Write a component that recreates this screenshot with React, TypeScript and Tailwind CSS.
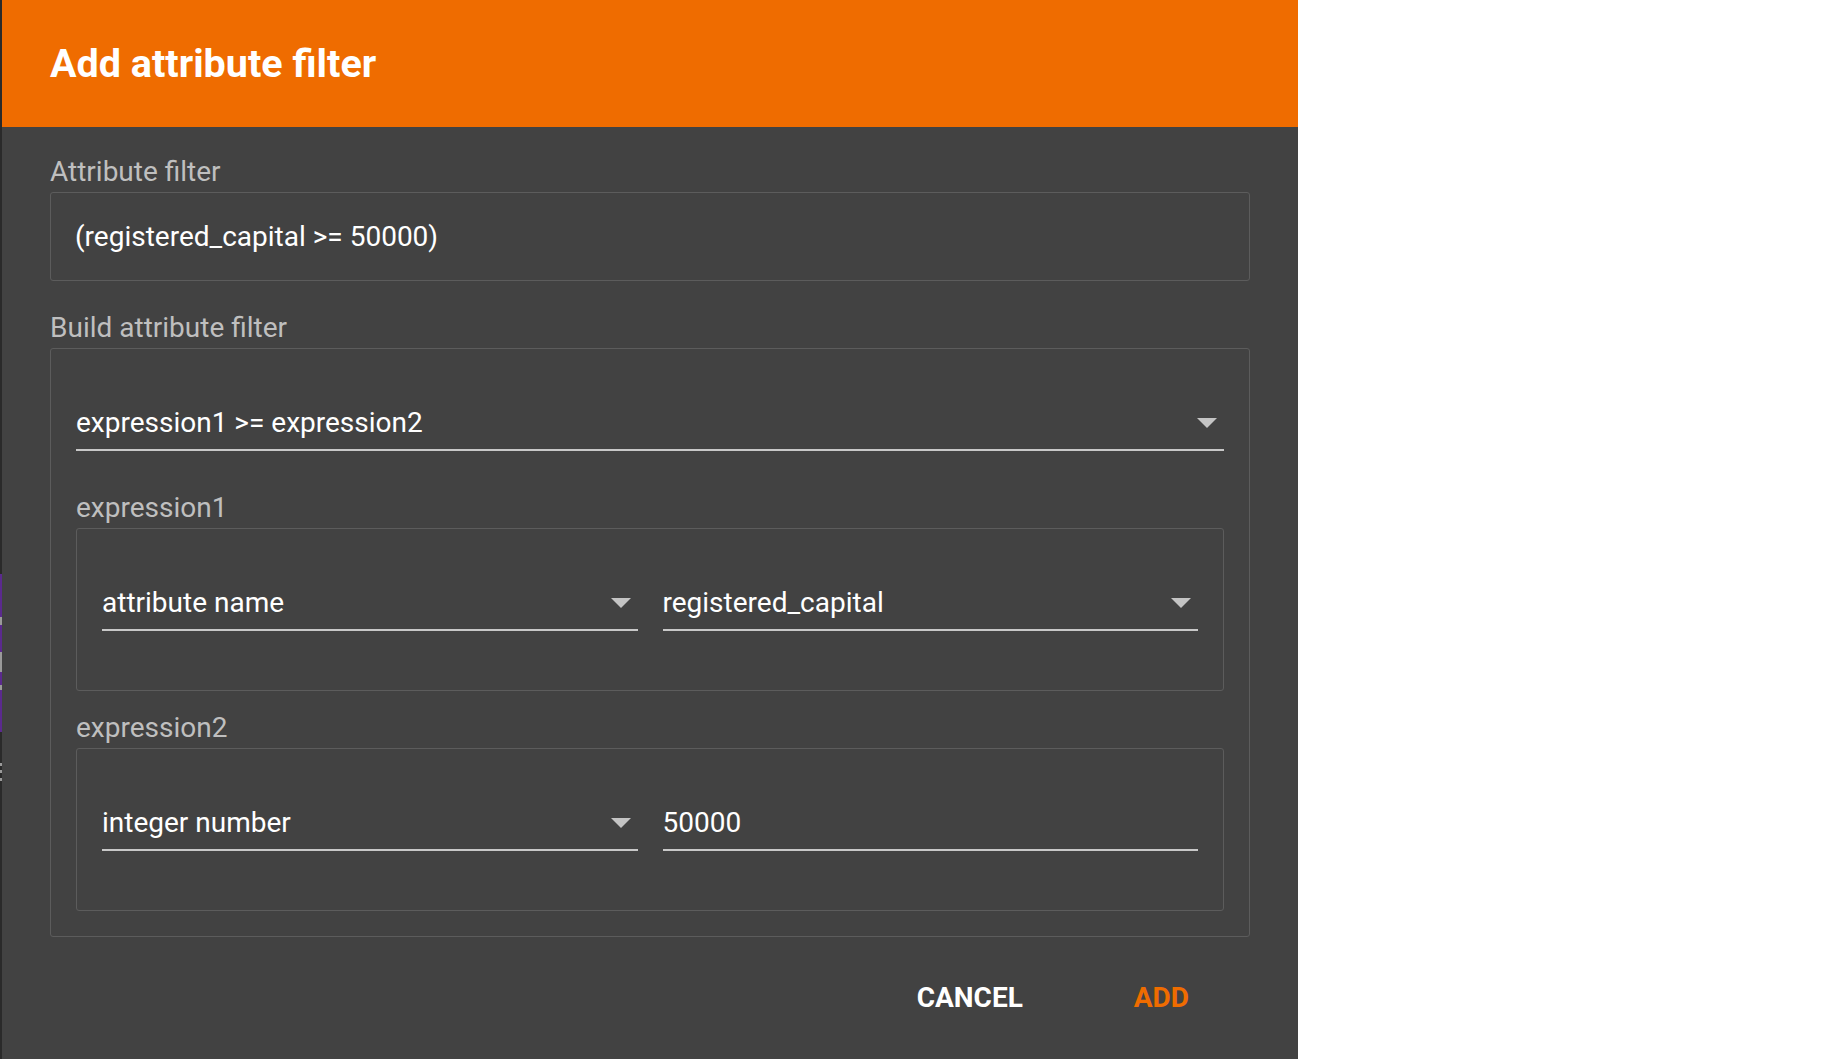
function Arrow() {
  return (
    <svg width="20" height="10" viewBox="0 0 20 10" className="shrink-0">
      <path d="M0 0 L20 0 L10 10 Z" fill="#c4c4c4" />
    </svg>
  );
}

function Select({ value, className = '' }: { value: string; className?: string }) {
  return (
    <div className={`flex flex-col ${className}`}>
      <div className="flex items-center justify-between h-[32px] pr-[7px]">
        <span className="text-white text-[28px] leading-[32px]">{value}</span>
        <Arrow />
      </div>
      <div className="mt-[10px] h-[2px] bg-[#c8c8c8]" />
    </div>
  );
}

function TextField({ value, className = '' }: { value: string; className?: string }) {
  return (
    <div className={`flex flex-col ${className}`}>
      <div className="h-[32px] flex items-center">
        <span className="text-white text-[28px] leading-[32px]">{value}</span>
      </div>
      <div className="mt-[10px] h-[2px] bg-[#c8c8c8]" />
    </div>
  );
}

function Label({ children }: { children: string }) {
  return <div className="text-[#bfbfbf] text-[28px] leading-[32px] mb-[4px]">{children}</div>;
}

function Expression({ label, left, right, rightIsText }: { label: string; left: string; right: string; rightIsText?: boolean }) {
  return (
    <div>
      <Label>{label}</Label>
      <div className="border border-[#5c5c5c] rounded-[3px] px-[25px] pt-[58px] pb-[59px] flex gap-[25px]">
        <Select value={left} className="flex-1" />
        {rightIsText ? <TextField value={right} className="flex-1" /> : <Select value={right} className="flex-1" />}
      </div>
    </div>
  );
}

export default function App() {
  return (
    <div className="w-full h-[1059px] flex bg-white font-['Roboto',sans-serif]">
      {/* page behind the dialog peeking on the left */}
      <div className="w-[2px] flex flex-col bg-[#2a2a2a]">
        <div className="h-[574px]" />
        <div className="h-[43px] bg-[#5b2a8e]" />
        <div className="h-[8px] bg-[#9a9a9a]" />
        <div className="h-[27px] bg-[#5b2a8e]" />
        <div className="h-[20px] bg-[#9a9a9a]" />
        <div className="h-[13px] bg-[#5b2a8e]" />
        <div className="h-[5px] bg-[#9a9a9a]" />
        <div className="h-[42px] bg-[#5b2a8e]" />
        <div className="h-[31px]" />
        <div className="h-[3px] bg-[#9a9a9a]" />
        <div className="h-[4px]" />
        <div className="h-[3px] bg-[#9a9a9a]" />
        <div className="h-[5px]" />
        <div className="h-[3px] bg-[#9a9a9a]" />
      </div>

      <div className="w-[1296px] flex flex-col bg-[#424242]">
        <div className="h-[127px] bg-[#ef6c00] px-[48px] flex items-center">
          <h1 className="text-white text-[39.5px] font-bold leading-[48px]">Add attribute filter</h1>
        </div>

        <div className="px-[48px] pt-[29px]">
          <Label>Attribute filter</Label>
          <div className="h-[89px] border border-[#5c5c5c] rounded-[3px] px-[24px] flex items-center">
            <span className="text-white text-[28px] leading-[32px]">(registered_capital &gt;= 50000)</span>
          </div>

          <div className="mt-[31px]">
            <Label>Build attribute filter</Label>
            <div className="border border-[#5c5c5c] rounded-[3px] px-[25px] pt-[58px] pb-[25px]">
              <Select value="expression1 >= expression2" />
              <div className="mt-[41px]">
                <Expression label="expression1" left="attribute name" right="registered_capital" />
              </div>
              <div className="mt-[21px]">
                <Expression label="expression2" left="integer number" right="50000" rightIsText />
              </div>
            </div>
          </div>

          <div className="mt-[45px] flex justify-end pr-[61px] gap-[111px]">
            <button className="text-white text-[28px] font-bold leading-[32px]">CANCEL</button>
            <button className="text-[#ef6c00] text-[28px] font-bold leading-[32px]">ADD</button>
          </div>
        </div>
      </div>
    </div>
  );
}
